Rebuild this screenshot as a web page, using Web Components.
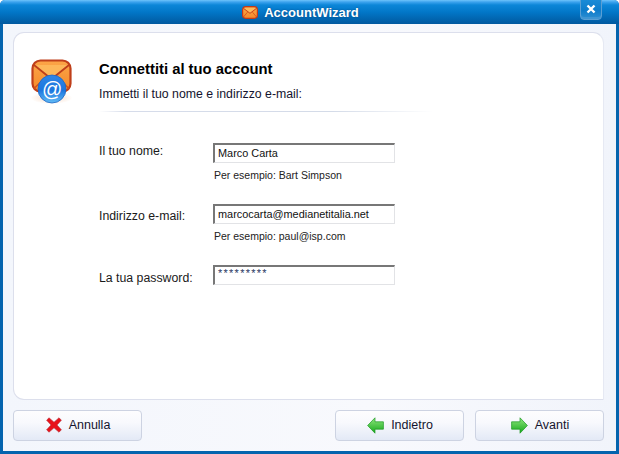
<!DOCTYPE html>
<html><head><meta charset="utf-8">
<style>html,body{margin:0;padding:0;background:#fff}body{width:619px;height:454px;overflow:hidden;font-family:"Liberation Sans",Arial,sans-serif}</style>
</head><body>
<wizard-window heading="Account Wizard">
  <wizard-header heading="Connettiti al tuo account" sub="Immetti il tuo nome e indirizzo e-mail:"></wizard-header>
  <wizard-field label="Il tuo nome:" value="Marco Carta" hint="Per esempio: Bart Simpson"></wizard-field>
  <wizard-field label="Indirizzo e-mail:" value="marcocarta@medianetitalia.net" hint="Per esempio: paul@isp.com" style="margin-top:23px"></wizard-field>
  <wizard-field label="La tua password:" value="*********" secret style="margin-top:23px"></wizard-field>
  <wizard-button slot="left" icon="x" label="Annulla"></wizard-button>
  <wizard-button slot="right" icon="back" label="Indietro"></wizard-button>
  <wizard-button slot="right" icon="next" label="Avanti"></wizard-button>
</wizard-window>
<script>
const MAIL=`<defs><linearGradient id="mg" x1="0" y1="0" x2="0" y2="1"><stop offset="0" stop-color="#fba845"/><stop offset="1" stop-color="#f48a2c"/></linearGradient></defs>
<rect x="1.5" y="1.5" width="37" height="29" rx="8" fill="url(#mg)" stroke="#c43a18" stroke-width="3"/>
<path d="M3 5 L20 18 L37 5" fill="#fdbb5c" stroke="#c43a18" stroke-width="2.4"/>
<path d="M3 28 L14 15 M37 28 L26 15" stroke="#d24e1c" stroke-width="2" fill="none"/>`;
customElements.define('mail-icon',class extends HTMLElement{connectedCallback(){
 const s=this.attachShadow({mode:'open'});
 const at=this.hasAttribute('at');
 s.innerHTML=`<style>:host{display:block;line-height:0}</style>`+(at?
 `<svg width="44" height="50" viewBox="0 0 44 50"><defs>
 <linearGradient id="mg" x1="0" y1="0" x2="0" y2="1"><stop offset="0" stop-color="#fca548"/><stop offset="1" stop-color="#f58a2a"/></linearGradient>
 <linearGradient id="ag" x1="0" y1="0" x2="0" y2="1"><stop offset="0" stop-color="#2f86e6"/><stop offset=".55" stop-color="#1c76de"/><stop offset="1" stop-color="#62bcf6"/></linearGradient>
 <radialGradient id="sh"><stop offset="0" stop-color="#f4c8a8" stop-opacity=".7"/><stop offset="1" stop-color="#f4c8a8" stop-opacity="0"/></radialGradient></defs>
 <ellipse cx="20.5" cy="39" rx="21" ry="6" fill="url(#sh)"/>
 <rect x="1.5" y="1.5" width="38" height="31" rx="8" fill="url(#mg)" stroke="#bf3f1a" stroke-width="2.2"/>
 <path d="M3 6 L20.5 20 L38 6" fill="#fdb75a" stroke="#bf3f1a" stroke-width="1.8"/>
 <path d="M2.5 30 L13 20 M38.5 30 L28 20" stroke="#cf501e" stroke-width="1.5" fill="none"/>
 <circle cx="21" cy="30" r="14" fill="url(#ag)" stroke="#1e66c4" stroke-width=".8"/>
 <text x="21" y="36.5" text-anchor="middle" font-family="Liberation Sans" font-style="italic" font-size="20" fill="#fff">@</text></svg>`:
 `<svg width="16" height="13" viewBox="0 0 40 32">${MAIL}</svg>`);
}});

customElements.define('wizard-window',class extends HTMLElement{connectedCallback(){
 const s=this.attachShadow({mode:'open'});
 s.innerHTML=`<style>
 :host{display:flex;flex-direction:column;width:619px;height:454px;box-sizing:border-box;border-radius:5px 5px 0 0;overflow:hidden;background:#0464ae}
 .bar{height:24px;flex:none;display:flex;align-items:center;justify-content:center;gap:6px;background:linear-gradient(#6fc4fb 0,#3da3ee 2px,#0c86d8 5px,#0277c8 12px,#01599f 24px);position:relative;padding-right:18px}
 .t{color:#fff;font:bold 13px "Liberation Sans",Arial,sans-serif;word-spacing:-3.6px;text-shadow:0 0 2px #024a86}
 .close{position:absolute;left:580px;top:-3px;width:22px;height:23px;box-sizing:border-box;border:1px solid #5a9fd4;border-radius:0 0 4px 4px;background:linear-gradient(#1d8ed9,#0e7ccb 60%,#2f8fd2);box-shadow:inset 0 -2px 0 #3f95d3;display:flex;align-items:center;justify-content:center}
 .wrap{flex:1;min-height:0;margin:0 3px 3px 3px;background:linear-gradient(90deg,#f3f6fc,#f8f9fd 60%,#f1f4fb);padding:8px 12px 10px 10px;box-sizing:border-box;display:flex;flex-direction:column}
 .panel{flex:1;min-height:0;background:#fff;border:1px solid #dcdfec;border-radius:11px 11px 0 11px;box-sizing:border-box;padding:25px 0 0 0;border-right-color:#e6e9f3}
 .foot{flex:none;margin-top:10px;display:flex;justify-content:space-between}
 .r{display:flex;gap:11px}
 .top{display:flex}
 .ic{margin:1px 0 0 17px;width:68px;flex:none}
 .main{flex:1;min-width:0}
 </style>
 <div class="bar"><mail-icon></mail-icon><span class="t">${this.getAttribute('heading')}</span>
 <div class="close"><svg width="10" height="10" viewBox="0 0 10 10"><path d="M1.5 1.5L8.5 8.5M8.5 1.5L1.5 8.5" stroke="#fff" stroke-width="2.4"/></svg></div></div>
 <div class="wrap"><div class="panel"><div class="top"><div class="ic"><mail-icon at></mail-icon></div><div class="main"><slot></slot></div></div></div>
 <div class="foot"><slot name="left"></slot><div class="r"><slot name="right"></slot></div></div></div>`;
}});

customElements.define('wizard-header',class extends HTMLElement{connectedCallback(){
 const s=this.attachShadow({mode:'open'});
 s.innerHTML=`<style>:host{display:block;color:#000;margin-bottom:31px}
 h1{margin:0;font:bold 14.8px/22px "Liberation Sans",Arial,sans-serif}
 p{margin:5px 0 0;font:12.3px/18px "Liberation Sans",Arial,sans-serif;color:#14142e}
 .rule{height:1px;width:334px;margin-top:8px;background:linear-gradient(90deg,#fff,#d6dcea 8%,#d4dbe8 70%,#fff)}</style>
 <h1>${this.getAttribute('heading')}</h1><p>${this.getAttribute('sub')}</p><div class="rule"></div>`;
}});

customElements.define('wizard-field',class extends HTMLElement{connectedCallback(){
 const s=this.attachShadow({mode:'open'});
 const hint=this.getAttribute('hint');
 const sec=this.hasAttribute('secret');
 const first=this.getAttribute('label').startsWith('Il');
 s.innerHTML=`<style>:host{display:grid;grid-template-columns:114px 182px;font-family:"Liberation Sans",Arial,sans-serif;color:#1a1a1a}
 .l{font-size:12.3px;line-height:14px;padding-top:${sec?6:first?1:5}px}
 .b{height:20px;box-sizing:border-box;border:2px solid #e2e3e6;border-top-color:#777;border-left-color:#777;border-right-width:1px;border-bottom-width:1px;background:#fff;font-size:10.9px;line-height:${sec?13:17}px;padding-left:3px;color:${sec?'#2c3a66':'#111'};letter-spacing:${sec?'1.3px':'0'};overflow:hidden;white-space:nowrap}
 .h{grid-column:2;font-size:10.5px;line-height:12px;margin-top:6px;padding-left:1px;color:#222}</style>
 <div class="l">${this.getAttribute('label')}</div><div class="b">${this.getAttribute('value')}</div>${hint?`<div class="h">${hint}</div>`:''}`;
}});

const ICONS={
 x:`<svg width="16" height="16" viewBox="0 0 16 16"><path d="M3 .8L8 5.2 13 .8 15.4 3.2 11 8 15.4 12.8 13 15.2 8 10.8 3 15.2 .6 12.8 5 8 .6 3.2Z" fill="#e8121a" stroke="#b5333a" stroke-width=".6"/></svg>`,
 back:`<svg width="17" height="17" viewBox="0 0 17 17"><defs><linearGradient id="g" x1="0" y1="0" x2="0" y2="1"><stop offset="0" stop-color="#8fe67e"/><stop offset="1" stop-color="#15a81a"/></linearGradient></defs><path d="M.6 8.5L8 .8V4.8H16.4V12.2H8V16.2Z" fill="url(#g)" stroke="#1c9a22" stroke-width=".7"/></svg>`,
 next:`<svg width="17" height="17" viewBox="0 0 17 17"><defs><linearGradient id="g" x1="0" y1="0" x2="0" y2="1"><stop offset="0" stop-color="#8fe67e"/><stop offset="1" stop-color="#15a81a"/></linearGradient></defs><path d="M16.4 8.5L9 .8V4.8H.6V12.2H9V16.2Z" fill="url(#g)" stroke="#1c9a22" stroke-width=".7"/></svg>`};
customElements.define('wizard-button',class extends HTMLElement{connectedCallback(){
 const s=this.attachShadow({mode:'open'});
 s.innerHTML=`<style>:host{display:flex;align-items:center;justify-content:center;gap:7px;width:129px;height:31px;box-sizing:border-box;border:1px solid #cdd3e2;border-radius:4px;background:linear-gradient(#fdfdfe,#f8f9fd 40%,#e3e9f6);font:12.5px "Liberation Sans",Arial,sans-serif;color:#14142e;padding-left:1px}
 svg{display:block;margin-top:-1px}span{margin-top:-2px}</style>${ICONS[this.getAttribute('icon')]}<span>${this.getAttribute('label')}</span>`;
}});
</script>
</body></html>
